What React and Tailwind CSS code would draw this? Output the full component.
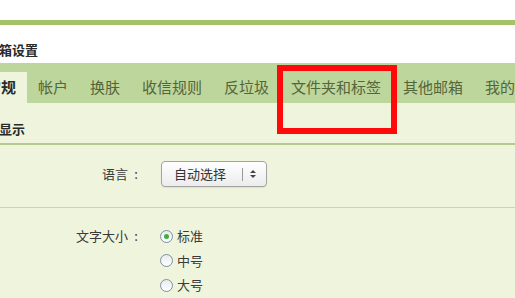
import React from "react";

const TABS = ["常规", "帐户", "换肤", "收信规则", "反垃圾", "文件夹和标签", "其他邮箱", "我的应用"];
const SIZES = ["标准", "中号", "大号"];

function Radio({ checked }) {
  return (
    <span className="w-[13px] h-[13px] rounded-full border border-[#7f8fa4] bg-gradient-to-b from-[#e8eaee] to-white flex items-center justify-center">
      {checked && <span className="w-[5px] h-[5px] rounded-full bg-[#3fae3a]" />}
    </span>
  );
}

function Label({ text }) {
  return (
    <div className="w-[144px] flex justify-end text-[13px] text-[#3a3a3a]">
      <span>{text}</span>
      <span className="w-[16px] text-center">:</span>
    </div>
  );
}

export default function App() {
  return (
    <div
      className="relative w-[515px] h-[298px] overflow-hidden bg-white text-[#333]"
      style={{ fontFamily: '"Noto Sans CJK SC", "Noto Sans", sans-serif' }}
    >
      <div className="h-[20px] bg-white" />
      <div className="h-[5px] bg-[#a4c266]" />

      <div className="h-[38px] flex items-center pt-[11px]">
        <span className="-ml-[14px] text-[13px] font-bold text-[#2a2a2a]">邮箱设置</span>
      </div>

      {/* tabs */}
      <div className="h-[40px] bg-[#bdd69c] pt-[9px] flex whitespace-nowrap">
        <div className="flex -ml-[25px]">
          {TABS.map((t, i) => (
            <div
              key={t}
              className={
                i === 0
                  ? "h-[31px] px-[11px] flex items-center bg-[#eef5dc] text-[15px] font-bold text-[#2b2b2b]"
                  : "h-[31px] px-[11px] flex items-center text-[15px] text-[#55653a]"
              }
            >
              {t}
            </div>
          ))}
        </div>
      </div>

      <div className="bg-[#eef5dc] h-[195px]">
        <div className="h-[42px] flex items-center pt-[11px] border-b-2 border-[#b5cb8d]">
          <span className="-ml-[1px] text-[13px] font-bold text-[#2a2a2a]">显示</span>
        </div>

        <div className="h-[63px] flex items-start pt-[16px] border-b border-[#c6d8a6]">
          <div className="h-[26px] flex items-center">
            <Label text="语言" />
          </div>
          <div className="ml-[17px] w-[106px] h-[26px] rounded-[4px] border border-[#a3a3a3] bg-gradient-to-b from-white to-[#ececec] shadow-[0_1px_1px_rgba(0,0,0,0.08)] flex items-center">
            <span className="pl-[12px] w-[80px] text-[13px] text-[#333]">自动选择</span>
            <span className="w-px h-[13px] bg-[#999]" />
            <svg width="8" height="10" viewBox="0 0 8 10" className="ml-[6px]">
              <path d="M4 1 L7 4 L1 4 Z" fill="#444" />
              <path d="M4 9 L7 6 L1 6 Z" fill="#444" />
            </svg>
          </div>
        </div>

        <div className="flex pt-[19px]">
          <div className="h-[18px] flex items-center">
            <Label text="文字大小" />
          </div>
          <div className="ml-[16px] flex flex-col gap-[6.5px]">
            {SIZES.map((s, i) => (
              <div key={s} className="flex items-center h-[18px] gap-[4px] text-[13px] text-[#3a3a3a]">
                <Radio checked={i === 0} />
                <span>{s}</span>
              </div>
            ))}
          </div>
        </div>
      </div>

      <div className="absolute left-[277px] top-[65px] w-[120px] h-[69px] border-[6px] border-[#ff0a0a]" />
    </div>
  );
}
